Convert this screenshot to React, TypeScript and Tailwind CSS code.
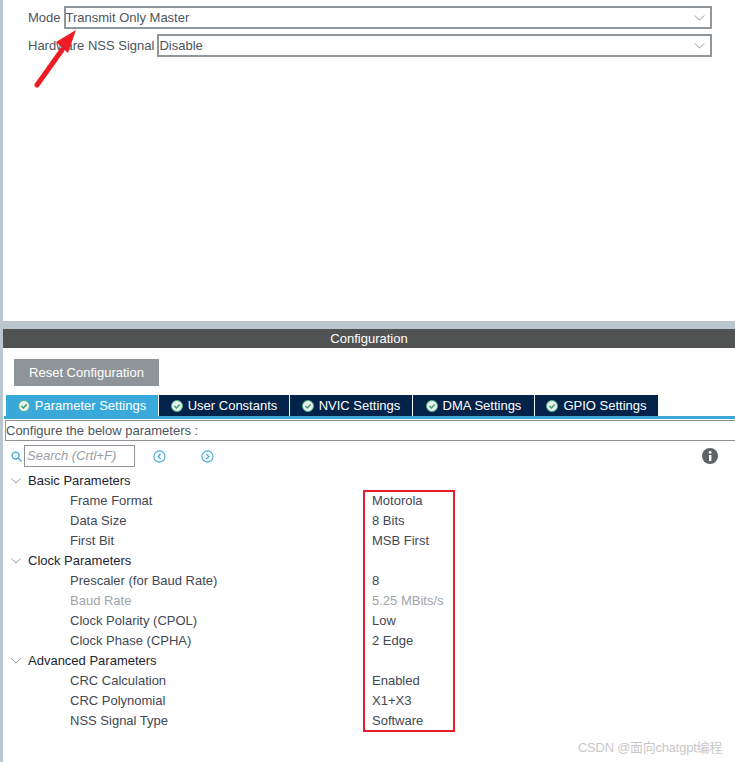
import React from "react";

const tabs = ["Parameter Settings", "User Constants", "NVIC Settings", "DMA Settings", "GPIO Settings"];
const tabWidths = ["w-[153px]", "w-[131px]", "w-[123px]", "w-[122px]", "w-[124px]"];

const groups = [
  {
    title: "Basic Parameters",
    rows: [
      ["Frame Format", "Motorola"],
      ["Data Size", "8 Bits"],
      ["First Bit", "MSB First"],
    ],
  },
  {
    title: "Clock Parameters",
    rows: [
      ["Prescaler (for Baud Rate)", "8"],
      ["Baud Rate", "5.25 MBits/s"],
      ["Clock Polarity (CPOL)", "Low"],
      ["Clock Phase (CPHA)", "2 Edge"],
    ],
  },
  {
    title: "Advanced Parameters",
    rows: [
      ["CRC Calculation", "Enabled"],
      ["CRC Polynomial", "X1+X3"],
      ["NSS Signal Type", "Software"],
    ],
  },
];

function Chevron({ className }: { className: string }) {
  return (
    <svg viewBox="0 0 12 7" className={className} fill="none" stroke="currentColor" strokeWidth="1">
      <path d="M0.5 0.5 L6 6 L11.5 0.5" />
    </svg>
  );
}

function SelectBox({ value }: { value: string }) {
  return (
    <div className="flex-1 h-[23px] border-2 border-[#8f979d] flex items-center justify-between pr-[5px] text-[#4d5560]">
      <span>{value}</span>
      <Chevron className="w-[11px] h-[6px] text-[#80878c]" />
    </div>
  );
}

function TabCheck() {
  return (
    <svg viewBox="0 0 12 12" className="w-[12px] h-[12px] shrink-0">
      <circle cx="6" cy="6" r="5.5" fill="#e8f3ee" stroke="#4fb081" />
      <path d="M3.4 6 L5.4 8 L8.6 4.4" fill="none" stroke="#3c9d70" strokeWidth="1.5" />
    </svg>
  );
}

function RoundArrow({ dir }: { dir: "left" | "right" }) {
  return (
    <svg viewBox="0 0 14 14" className="w-[13px] h-[13px]" fill="none" stroke="#39a9dc" strokeWidth="1.2">
      <circle cx="7" cy="7" r="6" />
      <path d={dir === "left" ? "M8.2 4.4 L5.6 7 L8.2 9.6" : "M5.8 4.4 L8.4 7 L5.8 9.6"} strokeWidth="1.4" />
    </svg>
  );
}

export default function App() {
  return (
    <div className="relative w-[735px] h-[762px] overflow-hidden bg-white flex font-['Liberation_Sans',Arial,'Noto_Sans_CJK_SC',sans-serif] text-[13px]">
      <div className="w-[3px] shrink-0 bg-[#b9c7cf]" />

      <div className="flex-1 flex flex-col min-w-0">
        {/* mode panel */}
        <div className="h-[321px] pt-[6px] pl-[25px] pr-[23px] flex flex-col gap-[5px] text-[#4d5560]">
          <div className="flex items-center gap-[3px]">
            <span>Mode</span>
            <SelectBox value="Transmit Only Master" />
          </div>
          <div className="flex items-center gap-[3px]">
            <span>Hardware NSS Signal</span>
            <SelectBox value="Disable" />
          </div>
        </div>

        <div className="h-[8px] bg-[#b9c6cd]" />
        <div className="h-[19px] bg-[#515352] flex items-center justify-center text-white">Configuration</div>

        {/* config panel */}
        <div className="pt-[11px] pl-[11px]">
          <button className="w-[145px] h-[27px] bg-[#8f9499] text-white">Reset Configuration</button>
        </div>

        <div className="mt-[9px] pl-[3px] flex h-[21px]">
          {tabs.map((t, i) => (
            <div
              key={t}
              className={`${tabWidths[i]} border-r border-white flex items-center justify-center gap-[5px] text-white ${i === 0 ? "bg-[#39a9dc]" : "bg-[#03234b]"}`}
            >
              <TabCheck />
              <span>{t}</span>
            </div>
          ))}
        </div>
        <div className="ml-[1px] h-[3px] bg-[#39a9dc]" />
        <div className="mt-[1px] ml-[2px] h-[21px] border-y border-l border-[#8e9296] flex items-center text-[#4d5560]">
          Configure the below parameters :
        </div>

        {/* search row */}
        <div className="mt-[4px] h-[22px] flex items-center pl-[8px] pr-[17px]">
          <svg viewBox="0 0 12 12" className="w-[11px] h-[11px]" fill="none" stroke="#39a9dc" strokeWidth="1.5">
            <circle cx="5" cy="5" r="3.8" />
            <path d="M8 8 L11.5 11.5" />
          </svg>
          <div className="ml-[2px] w-[111px] h-[22px] border border-[#8e9296] flex items-center pl-[2px] italic text-[#9a9ea3]">
            Search (Crtl+F)
          </div>
          <div className="ml-[18px]">
            <RoundArrow dir="left" />
          </div>
          <div className="ml-[35px]">
            <RoundArrow dir="right" />
          </div>
          <svg viewBox="0 0 16 16" className="ml-auto w-[16px] h-[16px]">
            <circle cx="8" cy="8" r="8" fill="#5f6266" />
            <rect x="7" y="7" width="2.4" height="6" fill="#fff" />
            <circle cx="8.2" cy="4.4" r="1.4" fill="#fff" />
          </svg>
        </div>

        {/* parameter tree */}
        <div className="mt-[3px] flex flex-col">
          {groups.map((g) => (
            <div key={g.title}>
              <div className="h-[20px] pt-[1px] flex items-center pl-[8px] text-[#1c2530]">
                <Chevron className="w-[10px] h-[6px] text-[#7d8589]" />
                <span className="ml-[7px]">{g.title}</span>
              </div>
              {g.rows.map(([name, value]) => {
                const muted = name === "Baud Rate";
                return (
                  <div key={name} className={`h-[20px] pt-[1px] flex items-center ${muted ? "text-[#a0a4a8]" : "text-[#3f4853]"}`}>
                    <span className="ml-[67px] w-[302px]">{name}</span>
                    <span>{value}</span>
                  </div>
                );
              })}
            </div>
          ))}
        </div>
      </div>

      {/* annotations drawn over the screenshot */}
      <svg viewBox="0 0 100 100" className="absolute left-0 top-0 w-[100px] h-[100px]">
        <path d="M37 85 L62 50" stroke="#ee1c25" strokeWidth="5" strokeLinecap="round" fill="none" />
        <path d="M76 30 L56 42 L68 53 Z" fill="#ee1c25" />
      </svg>
      <div className="absolute left-[363px] top-[490px] w-[92px] h-[242px] border-2 border-[#e81c2c]" />
      <div className="absolute right-[13px] bottom-[5px] text-[13px] tracking-[-0.25px] text-[#c8c8c8]">CSDN @面向chatgpt编程</div>
    </div>
  );
}
